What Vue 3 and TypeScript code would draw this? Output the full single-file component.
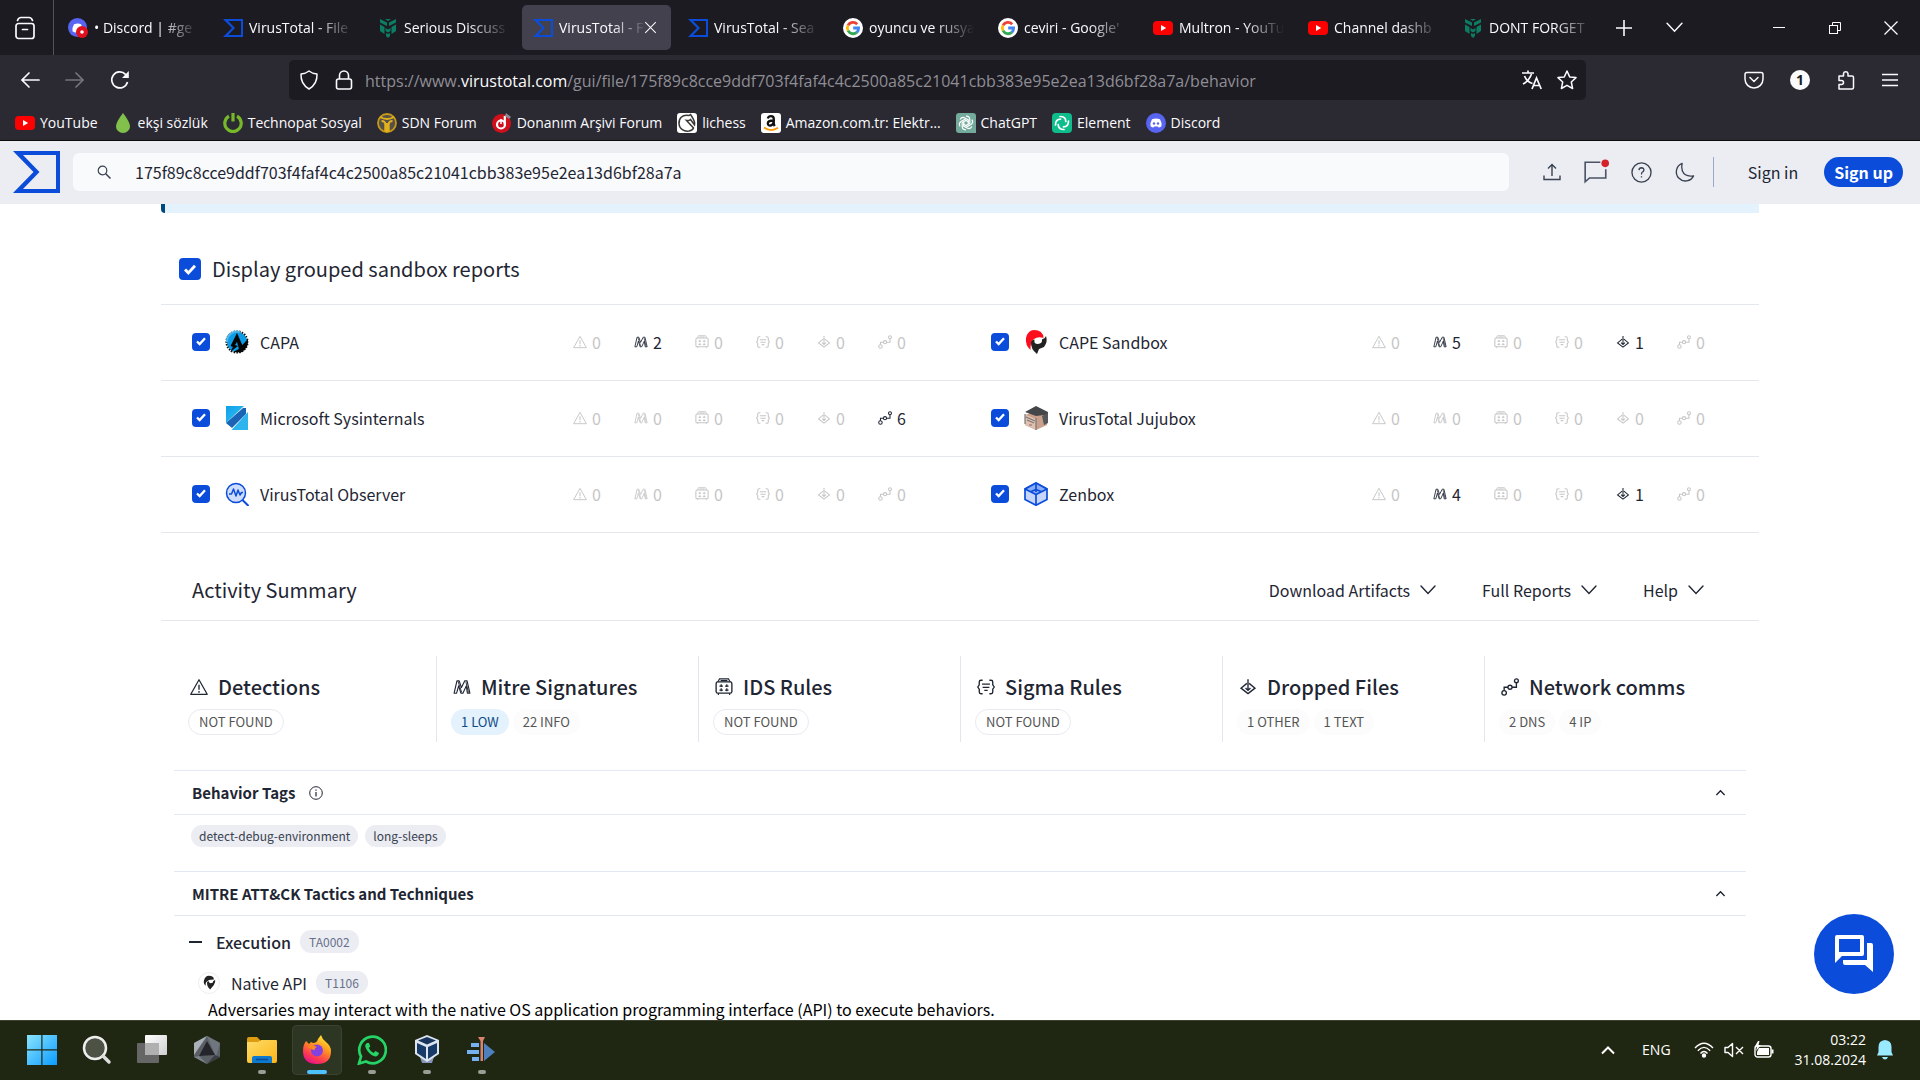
<script setup lang="ts">
import { ref } from 'vue'

interface Tab { icon: string; title: string; active?: boolean }
interface Bookmark { icon: string; label: string }
interface Sandbox { id: string; icon: string; name: string; counts: number[] }
interface Pill { text: string; kind: 'outline' | 'low' | 'plain' }
interface SummaryCard { icon: string; title: string; pills: Pill[] }
interface TaskItem { icon: string; label: string; state?: 'open' | 'active' }

const hash = '175f89c8cce9ddf703f4faf4c4c2500a85c21041cbb383e95e2ea13d6bf28a7a'
const query = ref(hash)
const grouped = ref(true)
const selected = ref(['capa', 'cape', 'sys', 'juju', 'obs', 'zen'])

const tabs: Tab[] = [
  { icon: 'discord-rec', title: '• Discord | #ge' },
  { icon: 'vt', title: 'VirusTotal - File' },
  { icon: 'wilders', title: 'Serious Discuss' },
  { icon: 'vt', title: 'VirusTotal - F', active: true },
  { icon: 'vt', title: 'VirusTotal - Sea' },
  { icon: 'google', title: 'oyuncu ve rusya' },
  { icon: 'google', title: "ceviri - Google'" },
  { icon: 'youtube', title: 'Multron - YouTu' },
  { icon: 'youtube', title: 'Channel dashb' },
  { icon: 'wilders', title: 'DONT FORGET' },
]

const bookmarks: Bookmark[] = [
  { icon: 'youtube', label: 'YouTube' },
  { icon: 'drop', label: 'ekşi sözlük' },
  { icon: 'power', label: 'Technopat Sosyal' },
  { icon: 'sdn', label: 'SDN Forum' },
  { icon: 'donanim', label: 'Donanım Arşivi Forum' },
  { icon: 'lichess', label: 'lichess' },
  { icon: 'amazon', label: 'Amazon.com.tr: Elektr…' },
  { icon: 'chatgpt', label: 'ChatGPT' },
  { icon: 'element', label: 'Element' },
  { icon: 'discord', label: 'Discord' },
]

const statIcons = ['warn', 'mitre', 'ids', 'sigma', 'dropped', 'net']

const sandboxes: Sandbox[] = [
  { id: 'capa', icon: 'capa', name: 'CAPA', counts: [0, 2, 0, 0, 0, 0] },
  { id: 'cape', icon: 'cape', name: 'CAPE Sandbox', counts: [0, 5, 0, 0, 1, 0] },
  { id: 'sys', icon: 'sysinternals', name: 'Microsoft Sysinternals', counts: [0, 0, 0, 0, 0, 6] },
  { id: 'juju', icon: 'jujubox', name: 'VirusTotal Jujubox', counts: [0, 0, 0, 0, 0, 0] },
  { id: 'obs', icon: 'observer', name: 'VirusTotal Observer', counts: [0, 0, 0, 0, 0, 0] },
  { id: 'zen', icon: 'zenbox', name: 'Zenbox', counts: [0, 4, 0, 0, 1, 0] },
]

const cards: SummaryCard[] = [
  { icon: 'warn', title: 'Detections', pills: [{ text: 'NOT FOUND', kind: 'outline' }] },
  { icon: 'mitre', title: 'Mitre Signatures', pills: [{ text: '1 LOW', kind: 'low' }, { text: '22 INFO', kind: 'plain' }] },
  { icon: 'ids', title: 'IDS Rules', pills: [{ text: 'NOT FOUND', kind: 'outline' }] },
  { icon: 'sigma', title: 'Sigma Rules', pills: [{ text: 'NOT FOUND', kind: 'outline' }] },
  { icon: 'dropped', title: 'Dropped Files', pills: [{ text: '1 OTHER', kind: 'plain' }, { text: '1 TEXT', kind: 'plain' }] },
  { icon: 'net', title: 'Network comms', pills: [{ text: '2 DNS', kind: 'plain' }, { text: '4 IP', kind: 'plain' }] },
]

const menus = ['Download Artifacts', 'Full Reports', 'Help']

const tasks: TaskItem[] = [
  { icon: 'win', label: 'Start' },
  { icon: 'tb-search', label: 'Search' },
  { icon: 'taskview', label: 'Task view' },
  { icon: 'gem', label: 'Cube app' },
  { icon: 'folder', label: 'File Explorer', state: 'open' },
  { icon: 'firefox', label: 'Firefox', state: 'active' },
  { icon: 'whatsapp', label: 'WhatsApp', state: 'open' },
  { icon: 'vbox', label: 'VirtualBox', state: 'open' },
  { icon: 'blocks', label: 'Startup tool', state: 'open' },
]
</script>

<template>
  <div class="screen">
    <svg class="sprite" aria-hidden="true">
      <defs>
        <linearGradient id="g-win" x1="0" y1="0" x2="1" y2="1"><stop offset="0" stop-color="#8be4ff" /><stop offset="1" stop-color="#0a9bff" /></linearGradient>
        <linearGradient id="g-fold" x1="0" y1="0" x2="1" y2="1"><stop offset="0" stop-color="#ffdc6a" /><stop offset="1" stop-color="#fbb616" /></linearGradient>
        <linearGradient id="g-ff" x1=".8" y1="0" x2=".3" y2="1"><stop offset="0" stop-color="#fff13a" /><stop offset=".4" stop-color="#ff9a1f" /><stop offset=".75" stop-color="#ff3d4f" /><stop offset="1" stop-color="#e6128b" /></linearGradient>
        <linearGradient id="g-tv" x1="0" y1="0" x2="1" y2="1"><stop offset="0" stop-color="#fff" /><stop offset="1" stop-color="#cfcfcf" /></linearGradient>
        <linearGradient id="g-sys" x1="0" y1="0" x2="1" y2="1"><stop offset="0" stop-color="#0f9fe8" /><stop offset="1" stop-color="#36c3f5" /></linearGradient>
      </defs>

      <symbol id="archive" viewBox="0 0 20 24" fill="none" stroke="#fbfbfe" stroke-width="1.7" stroke-linecap="round"><rect x="1" y="7.5" width="18" height="15" rx="2.5" /><path d="M2.5 4.5Q3.5 1.5 6 1.5H14Q16.5 1.5 17.5 4.5M7.5 13.5H12.5" /></symbol>
      <symbol id="vt" viewBox="0 0 20 20"><path d="M0 1H20V19H0L9 10ZM5.2 3L12 10L5.2 17H18V3Z" fill="#0b4dda" fill-rule="evenodd" /></symbol>
      <symbol id="vt-logo" viewBox="0 0 47 42"><path d="M0 0H47V42H0L20.500 21ZM10 4L26.500 21L10 38H43V4Z" fill="#0b4dda" fill-rule="evenodd" /></symbol>
      <symbol id="discord" viewBox="0 0 20 20"><circle cx="10" cy="10" r="10" fill="#5865f2" /><path d="M6 6.200Q10 5 14 6.200Q16 9.500 15.500 13.200Q14 14.500 12.500 14.500L12 13.500H8L7.500 14.500Q6 14.500 4.500 13.200Q4 9.500 6 6.200Z" fill="#fff" /><circle cx="8" cy="10.500" r="1.200" fill="#5865f2" /><circle cx="12" cy="10.500" r="1.200" fill="#5865f2" /></symbol>
      <symbol id="discord-rec" viewBox="0 0 20 20"><circle cx="9.500" cy="9.500" r="9.500" fill="#5865f2" /><path d="M6 6.200Q10 5 13 6.200Q15 9.500 14.500 13.200L12 14.500H8Q6 14.500 4.500 13.200Q4 9.500 6 6.200Z" fill="#fff" /><circle cx="14" cy="14" r="6" fill="#e0101c" /><circle cx="14" cy="14" r="1.800" fill="#fff" /></symbol>
      <symbol id="wilders" viewBox="0 0 20 20" fill="#0c7d62"><path d="M2 1L9 4.500V8L2 4.500ZM18 1L11 4.500V8L18 4.500ZM7 1H13L10 3ZM2 6.500L6.500 9V16L2 13ZM18 6.500L13.500 9V16L18 13ZM7.500 10L10 11.500L12.500 10V13L10 14.500L7.500 13ZM8 15L10 16L12 15V18L10 20L8 18Z" /></symbol>
      <symbol id="google" viewBox="0 0 20 20"><circle cx="10" cy="10" r="10" fill="#fff" /><g fill="none" stroke-width="2.800"><path d="M14.200 6.200A5.800 5.800 0 0 0 5 7.300" stroke="#ea4335" /><path d="M5 7.300A5.800 5.800 0 0 0 5 12.700" stroke="#fbbc05" /><path d="M5 12.700A5.800 5.800 0 0 0 13.800 14.400" stroke="#34a853" /><path d="M13.800 14.400A5.800 5.800 0 0 0 15.600 10H10.200" stroke="#4285f4" /></g></symbol>
      <symbol id="youtube" viewBox="0 0 20 20"><rect y="3" width="20" height="14" rx="4" fill="#f00" /><path d="M8 7V13L13.200 10Z" fill="#fff" /></symbol>
      <symbol id="drop" viewBox="0 0 20 20"><path d="M10 0Q17 9 17 13.500A7 6.500 0 0 1 3 13.500Q3 9 10 0Z" fill="#81c14b" /></symbol>
      <symbol id="power" viewBox="0 0 20 20" fill="none" stroke="#77b82a" stroke-width="3.200"><path d="M6 3.200A8.200 8.200 0 1 0 14 3.200M10 0V8.500" /></symbol>
      <symbol id="sdn" viewBox="0 0 20 20"><circle cx="10" cy="10" r="9" fill="#55504a" stroke="#c79a16" stroke-width="1.800" /><path d="M3 4Q10 8 17 4M4.500 8Q8 8 8.300 11V18.500M15.500 8Q12 8 11.700 11V18.500M10 10V19" fill="none" stroke="#e3b21b" stroke-width="2" /></symbol>
      <symbol id="donanim" viewBox="0 0 20 20"><circle cx="9.500" cy="10.500" r="9.500" fill="#d0101a" /><circle cx="9" cy="11.500" r="4" fill="none" stroke="#fff" stroke-width="2.200" /><path d="M12.800 3V12" stroke="#fff" stroke-width="2.200" /><path d="M14 0L19 4L17 6L13 3Z" fill="#8c8c90" /><path d="M9 6V11" stroke="#fff" stroke-width="1.500" /></symbol>
      <symbol id="lichess" viewBox="0 0 20 20"><rect width="20" height="20" rx="3" fill="#fff" /><path d="M12 2.500C5 1 1.500 6 2 11C2.500 16 7 18.800 12 18C14.500 17.500 16 16.500 16.500 15L9.500 7.500Q12 8 13.500 6.500L17.500 12Q18.500 9 14.500 3L13.500 1.500Z" fill="#fff" stroke="#3b3936" stroke-width="1.500" /></symbol>
      <symbol id="amazon" viewBox="0 0 20 20"><rect width="20" height="20" rx="3" fill="#fff" /><path d="M6.800 5.500Q7.500 3.200 10 3.200Q12.800 3.200 12.800 6V11.500L13.800 13M12.500 7.500Q6.800 7.500 6.800 10.500Q7 12.800 9.500 12.500Q12 12 12.500 9.500" fill="none" stroke="#111" stroke-width="2.300" /><path d="M3 14.500Q10 19.500 17 14.800" fill="none" stroke="#f90" stroke-width="1.700" /></symbol>
      <symbol id="chatgpt" viewBox="0 0 20 20"><path d="M3 0H17Q20 0 20 3V20H3Q0 20 0 17V3Q0 0 3 0Z" fill="#74aa9c" /><g fill="none" stroke="#fff" stroke-width="1.200"><path id="petal" d="M10 3.200Q13.500 3 13.800 6.500V10.500L10 12.500" /><use href="#petal" transform="rotate(60 10 10)" /><use href="#petal" transform="rotate(120 10 10)" /><use href="#petal" transform="rotate(180 10 10)" /><use href="#petal" transform="rotate(240 10 10)" /><use href="#petal" transform="rotate(300 10 10)" /></g></symbol>
      <symbol id="element" viewBox="0 0 20 20"><rect width="20" height="20" rx="4" fill="#0dbd8b" /><g fill="none" stroke="#fff" stroke-width="1.700" stroke-linecap="round"><path id="arm" d="M8 3.500Q13.800 3.500 13.800 8.500" /><use href="#arm" transform="rotate(90 10 10)" /><use href="#arm" transform="rotate(180 10 10)" /><use href="#arm" transform="rotate(270 10 10)" /></g></symbol>

      <symbol id="plus" viewBox="0 0 16 16"><path d="M8 0V16M0 8H16" stroke="currentColor" stroke-width="1.600" /></symbol>
      <symbol id="chev" viewBox="0 0 16 16"><path d="M1 4L8 11.500L15 4" fill="none" stroke="currentColor" stroke-width="1.400" stroke-linecap="round" /></symbol>
      <symbol id="chev-up" viewBox="0 0 16 16"><path d="M2 11.500L8 5.500L14 11.500" fill="none" stroke="currentColor" stroke-width="2" /></symbol>
      <symbol id="min" viewBox="0 0 16 16"><path d="M2 7.500H14" stroke="currentColor" /></symbol>
      <symbol id="restore" viewBox="0 0 16 16" fill="none" stroke="currentColor"><rect x="2.500" y="5.500" width="8" height="8" /><path d="M5.500 5V2.500H13.500V10.500H11" /></symbol>
      <symbol id="close" viewBox="0 0 16 16"><path d="M1.500 1.500L14.500 14.500M14.500 1.500L1.500 14.500" stroke="currentColor" stroke-width="1.300" /></symbol>
      <symbol id="back" viewBox="0 0 20 20"><path d="M19 10H2M9 3L2 10L9 17" fill="none" stroke="currentColor" stroke-width="1.700" stroke-linecap="round" /></symbol>
      <symbol id="reload" viewBox="0 0 20 20"><path d="M17.500 12A8 8 0 1 1 15.500 4.300L18 6.500" fill="none" stroke="currentColor" stroke-width="1.700" /><path d="M18.800 1V8H12Z" fill="currentColor" /></symbol>
      <symbol id="shield" viewBox="0 0 20 20"><path d="M10 1Q13 3.500 18 4Q18.500 14 10 19Q1.500 14 2 4Q7 3.500 10 1Z" fill="none" stroke="currentColor" stroke-width="1.500" stroke-linejoin="round" /></symbol>
      <symbol id="lock" viewBox="0 0 20 20" fill="none" stroke="currentColor" stroke-width="1.600"><rect x="2.500" y="9" width="15" height="10" rx="2" /><path d="M5.500 9V5.500A4.500 4.500 0 0 1 14.500 5.500V9" /></symbol>
      <symbol id="translate" viewBox="0 0 20 20" fill="none" stroke="currentColor" stroke-width="1.700"><path d="M0 3H12M6 .500V3M2.500 6Q5 12 10.500 13.500M9.500 4Q7 11 1 14M10 19L14.500 8L19.200 19M11.500 15.500H17.500" /></symbol>
      <symbol id="star" viewBox="0 0 20 20"><path d="M10 1L12.700 6.900L19 7.600L14.300 12L15.600 18.500L10 15.300L4.400 18.500L5.700 12L1 7.600L7.300 6.900Z" fill="none" stroke="currentColor" stroke-width="1.500" stroke-linejoin="round" /></symbol>
      <symbol id="pocket" viewBox="0 0 20 20" fill="none" stroke="currentColor" stroke-width="1.500" stroke-linecap="round"><path d="M3 2.500H17Q19 2.500 19 4.500V9A9 9 0 0 1 1 9V4.500Q1 2.500 3 2.500Z" /><path d="M6 7.500L10 11.500L14 7.500" /></symbol>
      <symbol id="puzzle" viewBox="0 0 20 20"><path d="M3 19V14.500H5.500A2 2 0 0 0 5.500 10.500H3V6H7.500V3.500A2.300 2.300 0 0 1 12 3.500V6H16Q17.500 6 17.500 7.500V17.500Q17.500 19 16 19Z" fill="none" stroke="currentColor" stroke-width="1.500" stroke-linejoin="round" /></symbol>
      <symbol id="burger" viewBox="0 0 16 16"><path d="M0 2.500H16M0 8H16M0 13.500H16" stroke="currentColor" stroke-width="1.400" /></symbol>

      <symbol id="search" viewBox="0 0 14 14" fill="none" stroke="#39414f"><circle cx="5.500" cy="5.500" r="4.300" stroke-width="1.200" /><path d="M8.500 8.500L13.500 13.500" stroke-width="1.500" /></symbol>
      <symbol id="upload" viewBox="0 0 18 18" fill="none" stroke="currentColor" stroke-width="1.400"><path d="M9 13V2M5 5.500L9 1.500L13 5.500M1 12.500V16.500H17V12.500" /></symbol>
      <symbol id="comment" viewBox="0 0 24 24"><path d="M16 3H2V21L6 17.500H21V9.500" fill="none" stroke="#4a5263" stroke-width="1.500" /><circle cx="20.500" cy="4" r="3.500" fill="#d2222a" /></symbol>
      <symbol id="help" viewBox="0 0 22 22" fill="none" stroke="currentColor" stroke-width="1.400"><circle cx="11" cy="11" r="10" /><path d="M8.300 8.500Q8.500 6 11 6Q13.700 6.200 13.500 8.500Q13.300 9.800 12 10.500Q11 11 11 13M11 14.800V16.300" /></symbol>
      <symbol id="moon" viewBox="0 0 22 22"><path d="M8.500 1.500A9.500 9.500 0 1 0 20.500 14.500Q11.500 16 8.800 9.500Q7.500 5 8.500 1.500Z" fill="none" stroke="currentColor" stroke-width="1.400" stroke-linejoin="round" /></symbol>

      <symbol id="warn" viewBox="0 0 16 16" fill="none" stroke="currentColor"><path d="M8 1.500L15.300 14.500H.700Z" stroke-width="1.100" stroke-linejoin="round" /><path d="M8 6V10.500M8 11.500V13" stroke-width="1.200" /></symbol>
      <symbol id="mitre" viewBox="0 0 16 16" fill="none" stroke="currentColor" stroke-linejoin="round"><path d="M1 13.500L3.500 2.500H5.500L7.500 8.500L10.500 2.500H12.500L15 13.500H12.800L11.800 7L8.800 13.500H7L5 7L3.200 13.500Z" stroke-width="1" /><path d="M4.500 3L7.800 13M11.500 3.500L13.800 13" stroke-width=".800" /></symbol>
      <symbol id="ids" viewBox="0 0 16 16" fill="none" stroke="currentColor"><rect x="1" y="3.500" width="14" height="10" rx="1.500" stroke-width="1.200" /><path d="M2.500 3.500L4 .800H12L13.500 3.500M5 2.300H11M3 13.500V15M13 13.500V15" stroke-width="1" /><path d="M5.500 5.500V8M10.500 5.500V8M5.500 9.200V11.700M10.500 9.200V11.700M4 7.200H7M9 7.200H12M4 10.800H7M9 10.800H12" stroke-width="1.100" /></symbol>
      <symbol id="sigma" viewBox="0 0 16 16" fill="none" stroke="currentColor" stroke-width="1.200"><path d="M5 2H3.500Q2 2 2 3.500V6L.700 8L2 10V12.500Q2 14 3.500 14H5M11 2H12.500Q14 2 14 3.500V6L15.300 8L14 10V12.500Q14 14 12.500 14H11M4.500 5.500H11.500M5 8.300H11M6.500 11H9.500" /></symbol>
      <symbol id="dropped" viewBox="0 0 16 16" fill="none" stroke="currentColor" stroke-width="1.200"><path d="M7 4.800L1.800 9L8 13.800L14.200 9L9 4.800M8 1V11M5.800 8.800L8 11L10.200 8.800" /></symbol>
      <symbol id="net" viewBox="0 0 16 16" fill="none" stroke="currentColor" stroke-width="1.200"><circle cx="2.800" cy="13.200" r="2" /><circle cx="8" cy="8.200" r="1.800" /><circle cx="13.700" cy="2.500" r="1.700" /><path d="M2.800 11V8.200H6.200M9.800 8.200H13.700V4.200" /></symbol>

      <symbol id="capa" viewBox="0 0 24 24"><circle cx="12" cy="12" r="10.200" fill="#0c9be6" /><circle cx="12" cy="12" r="10.700" fill="none" stroke="#111" stroke-width="1.800" stroke-dasharray="1.500 1.300" stroke-dashoffset="1" /><path d="M23 9Q24 18 16 22.500L8 22L13 19.500Z" fill="#050505" /><path d="M12 3L19 19H14L12 12L10 15L13 16L5 22L8 17L5.500 16Z" fill="#050505" /><path d="M2 12A10 10 0 0 1 15 2" fill="none" stroke="#4fb9ee" stroke-width="2" /></symbol>
      <symbol id="cape" viewBox="0 0 24 24"><path d="M10 0Q19 0 19.500 8Q14 6 10 9Q6 12 6.500 20Q1 15 2 8Q4 0 10 0Z" fill="#fb0d1c" /><path d="M22 6Q24 12 20 17L15 19L13 24Q6.500 19 7 12Q8 9.500 10.500 9.500Q9.500 14 14 14Q18.500 13.500 18 9.500Q21 9 22 6Z" fill="#222" /></symbol>
      <symbol id="cape-dark" viewBox="0 0 24 24"><path d="M11 1Q19 1 19 7L15 7.500Q10 7 9 10Q5 11 6 17Q2 14 3 9Q5 1 11 1Z" fill="#222" /><path d="M21 7Q22 12 19 16L13 23Q8 19 8 12Q9 10 11 10Q11 13 14 13Q18 13 18 9.500Q20 9 21 7Z" fill="#222" /></symbol>
      <symbol id="sysinternals" viewBox="0 0 24 24"><path d="M1 0H19L1 17Z" fill="url(#g-sys)" /><path d="M18 2H21V8L7 22L1 17Z" fill="#1b63b4" /><path d="M23 6V24H6.500Z" fill="#2db4ef" /></symbol>
      <symbol id="jujubox" viewBox="0 0 24 24"><path d="M12 5L23 9V19L12 24L1 19V9Z" fill="#c9a08c" /><path d="M1 8.500L12 13V24L1 19Z" fill="#e3c0ae" /><path d="M12 0L24 6V12L20 9L12 10L1 6Z" fill="#444649" /><path d="M18 10L24 7V17L20 19Z" fill="#55575a" /><path d="M2 11L11 15M3 14L10 17M5 19H8M1 8V18M12 12V24" stroke="#777" stroke-width="1.200" fill="none" /></symbol>
      <symbol id="observer" viewBox="0 0 24 24"><circle cx="11" cy="11" r="9.500" fill="#cfdcfb" stroke="#0b4dda" stroke-width="1.500" /><path d="M4 12H6.500L8.500 7L11 14L13 8L15 13L16.500 10.500H18" fill="none" stroke="#0b4dda" stroke-width="1.500" stroke-linejoin="round" /><path d="M17.500 18L23.500 24" stroke="#0b4dda" stroke-width="2" /></symbol>
      <symbol id="zenbox" viewBox="0 0 24 24" stroke="#0b4dda" stroke-width="1.700" stroke-linejoin="round"><path d="M12 1L23 7V17.500L12 23.200L1 17.500V7Z" fill="#c5d6fa" /><path d="M12 1L23 7L12 12.500L1 7Z" fill="#8aadf5" /><path d="M12 1V10M12 12.500V23M7 9.500L12 7.500L17 9.500" fill="none" /></symbol>
      <symbol id="info" viewBox="0 0 14 14" fill="none" stroke="currentColor"><circle cx="7" cy="7" r="6.300" /><path d="M7 6V10.500M7 3.500V4.800" stroke-width="1.200" /></symbol>
      <symbol id="forum" viewBox="0 0 38 38" fill="#fff"><path d="M2 0H27Q29 0 29 2V19Q29 21 27 21H7L0 28V2Q0 0 2 0ZM4 4V17H25V4Z" fill-rule="evenodd" /><path d="M32 8H36Q38 8 38 10V37L30 30H10Q8 30 8 28V25H32Z" /></symbol>

      <symbol id="win" viewBox="0 0 30 30"><path d="M0 0H14.300V14.300H0ZM15.500 0H30V14.300H15.500ZM0 15.500H14.300V30H0ZM15.500 15.500H30V30H15.500Z" fill="url(#g-win)" /></symbol>
      <symbol id="tb-search" viewBox="0 0 30 30"><circle cx="13" cy="13" r="11" fill="#4c5344" stroke="#eee" stroke-width="2.500" /><path d="M21 21L27 27" stroke="#ddd" stroke-width="3.500" stroke-linecap="round" /></symbol>
      <symbol id="taskview" viewBox="0 0 30 30"><rect y="8" width="22" height="20" rx="1" fill="#666" /><rect x="8" width="22" height="20" rx="1" fill="url(#g-tv)" /><path d="M8 8H22V20H8Z" fill="#b0b0b0" /></symbol>
      <symbol id="gem" viewBox="0 0 30 30"><path d="M15 1L28 8V22L15 29L2 22V8Z" fill="#5b6066" /><path d="M15 1L2 8V20Z" fill="#aab1b9" /><path d="M15 1L28 8L24 22Z" fill="#70767e" /><path d="M15 6L23 20L7 21Z" fill="#24262b" /><path d="M2 22L7 21L15 29Z" fill="#7b8189" /><path d="M15 29L23 20L28 22Z" fill="#3a3d42" /></symbol>
      <symbol id="folder" viewBox="0 0 30 30"><path d="M0 4Q0 2 2 2H10L13 5V10H0Z" fill="#dd9c10" /><path d="M0 7H11L14 5H29Q30 5 30 6V26Q30 28 28 28H2Q0 28 0 26Z" fill="url(#g-fold)" /><path d="M5 28V23Q5 21 7 21H23Q25 21 25 23V28Z" fill="#0d79cf" /><path d="M9 24.500H21" stroke="#0b4a8f" stroke-width="1.500" /></symbol>
      <symbol id="firefox" viewBox="0 0 30 30"><path d="M4 6L7 9L9 7L11 8Q15 8 16 4L19 0Q20 4 24 7Q29 11 29 16Q29 29 15 29Q1 29 1 16Q1 10 4 6Z" fill="url(#g-ff)" /><circle cx="15" cy="15.500" r="6" fill="#8342e0" /><path d="M6 12Q11 9 15 12Q12 13 13 15Q10 15 8 13Z" fill="#ff8a1d" /></symbol>
      <symbol id="whatsapp" viewBox="0 0 30 30"><path d="M2 28.500L4 21.500A13.300 13.300 0 1 1 9 26.500Z" fill="none" stroke="#25d366" stroke-width="2.700" /><path d="M10 8Q7 9.500 9 13.500Q12 19.500 17.500 21.300Q21 22 22 18L18.500 16L16.500 18Q13 16 11.800 13L13.300 11.500L12 8Z" fill="#25d366" /></symbol>
      <symbol id="vbox" viewBox="0 0 30 30"><path d="M8 22L22 22L20 28H10Z" fill="#8796b8" /><path d="M15 0L27 5V19L15 27L3 19V5Z" fill="#dce4f0" /><path d="M15 2L24 5.500L15 9.500L6 5.500Z" fill="#18345c" /><path d="M5 8L14 12V24L5 18ZM25 8L16 12V24L25 18Z" fill="#183a69" /></symbol>
      <symbol id="blocks" viewBox="0 0 30 30"><path d="M4 8H12V12H4ZM0 15H12V19H0ZM5 22H12V26H5Z" fill="#77b0ee" /><path d="M17 8L28 17L17 26Z" fill="#4d80bd" /><path d="M11 2H18L16 6V26H13.500V6Z" fill="#d98470" /></symbol>
      <symbol id="wifi" viewBox="0 0 20 16" fill="none" stroke="currentColor" stroke-width="1.400"><path d="M1 6Q10-3.500 19 6M3.800 8.800Q10 2 16.200 8.800M6.500 11.500Q10 7.500 13.500 11.500" /><circle cx="10" cy="13.500" r="1.500" fill="currentColor" /></symbol>
      <symbol id="mute" viewBox="0 0 20 16" fill="none" stroke="currentColor" stroke-width="1.400"><path d="M1 5.500H4L8.500 1.500V14.500L4 10.500H1ZM12 5L19 12M19 5L12 12" stroke-linejoin="round" /></symbol>
      <symbol id="battery" viewBox="0 0 20 18"><rect x="1" y="5" width="16" height="11" rx="2.500" fill="none" stroke="currentColor" stroke-width="1.400" /><path d="M5 7H15V14H3V11ZM17.500 8.500H19.500V12.500H17.500ZM4 0L.500 6H3L2 10L7 4H4.500L5.500 0Z" fill="currentColor" /></symbol>
      <symbol id="bell" viewBox="0 0 16 20"><path d="M8 0Q14.500 .500 14.500 7V12L16 15.500H0L1.500 12V7Q1.500 .500 8 0ZM5 17H11Q10 19.500 8 19.500Q6 19.500 5 17Z" fill="#9aeaff" /></symbol>
    </svg>

    <header class="chrome">
      <div class="tab-row">
        <button class="recent" aria-label="Recent browsing"><svg width="20" height="24"><use href="#archive" /></svg></button>
        <nav class="tabs" aria-label="Tabs">
          <div v-for="(t, i) in tabs" :key="i" class="tab" :class="{ active: t.active }">
            <svg class="fav"><use :href="'#' + t.icon" /></svg>
            <span class="tab-title">{{ t.title }}</span>
            <button v-if="t.active" class="tab-close" aria-label="Close tab"><svg width="13" height="13"><use href="#close" /></svg></button>
          </div>
        </nav>
        <div class="tab-actions">
          <button aria-label="New tab"><svg width="16" height="16"><use href="#plus" /></svg></button>
          <button aria-label="List all tabs"><svg width="17" height="17"><use href="#chev" /></svg></button>
        </div>
        <div class="win-actions">
          <button aria-label="Minimize"><svg width="16" height="16"><use href="#min" /></svg></button>
          <button aria-label="Restore"><svg width="16" height="16"><use href="#restore" /></svg></button>
          <button aria-label="Close window"><svg width="16" height="16"><use href="#close" /></svg></button>
        </div>
      </div>

      <div class="nav-row">
        <div class="nav-buttons">
          <button aria-label="Back"><svg width="20" height="20"><use href="#back" /></svg></button>
          <button class="dim flip" aria-label="Forward"><svg width="20" height="20"><use href="#back" /></svg></button>
          <button aria-label="Reload"><svg width="20" height="20"><use href="#reload" /></svg></button>
        </div>
        <div class="url-bar">
          <svg width="20" height="20"><use href="#shield" /></svg>
          <svg width="20" height="20"><use href="#lock" /></svg>
          <div class="url" role="textbox" aria-label="Address">https://www.<b>virustotal.com</b>/gui/file/{{ hash }}/behavior</div>
          <svg width="20" height="20"><use href="#translate" /></svg>
          <svg width="20" height="20"><use href="#star" /></svg>
        </div>
        <div class="ext-buttons">
          <button aria-label="Save to Pocket"><svg width="20" height="20"><use href="#pocket" /></svg></button>
          <button aria-label="Extension"><span class="one">1</span></button>
          <button aria-label="Extensions"><svg width="20" height="20"><use href="#puzzle" /></svg></button>
          <button aria-label="Menu"><svg width="16" height="16"><use href="#burger" /></svg></button>
        </div>
      </div>

      <nav class="bookmarks" aria-label="Bookmarks">
        <a v-for="b in bookmarks" :key="b.label" href="#"><svg class="fav"><use :href="'#' + b.icon" /></svg>{{ b.label }}</a>
      </nav>
    </header>

    <div class="vt">
      <header class="vt-head">
        <a href="#" class="logo" aria-label="VirusTotal"><svg width="47" height="42"><use href="#vt-logo" /></svg></a>
        <label class="search">
          <svg width="14" height="14"><use href="#search" /></svg>
          <input v-model="query" type="text" aria-label="Search" />
        </label>
        <div class="head-icons">
          <button aria-label="Upload"><svg width="18" height="18"><use href="#upload" /></svg></button>
          <button aria-label="Comments"><svg width="26" height="26"><use href="#comment" /></svg></button>
          <button aria-label="Help"><svg width="21" height="21"><use href="#help" /></svg></button>
          <button aria-label="Dark mode"><svg width="21" height="21"><use href="#moon" /></svg></button>
        </div>
        <a href="#" class="sign-in">Sign in</a>
        <a href="#" class="sign-up">Sign up</a>
      </header>

      <main class="page">
        <div class="notice"></div>
        <label class="group-toggle"><input v-model="grouped" type="checkbox" class="check big" />Display grouped sandbox reports</label>

        <div class="sandboxes">
          <div v-for="s in sandboxes" :key="s.id" class="sandbox">
            <label class="sandbox-name">
              <input v-model="selected" type="checkbox" class="check" :value="s.id" />
              <svg width="24" height="24"><use :href="'#' + s.icon" /></svg>{{ s.name }}
            </label>
            <ul class="stats">
              <li v-for="(c, i) in s.counts" :key="i" :class="{ on: c > 0 }">
                <svg width="14" height="14"><use :href="'#' + statIcons[i]" /></svg>{{ c }}
              </li>
            </ul>
          </div>
        </div>

        <div class="summary-head">
          <h2>Activity Summary</h2>
          <div class="menus">
            <button v-for="m in menus" :key="m">{{ m }}<svg width="16" height="16"><use href="#chev" /></svg></button>
          </div>
        </div>

        <div class="details">
          <div class="cards">
            <section v-for="c in cards" :key="c.title" class="card">
              <h3><svg width="18" height="18"><use :href="'#' + c.icon" /></svg>{{ c.title }}</h3>
              <div class="pills"><span v-for="p in c.pills" :key="p.text" class="pill" :class="p.kind">{{ p.text }}</span></div>
            </section>
          </div>

          <section>
            <button class="section-head">Behavior Tags<svg class="info" width="14" height="14"><use href="#info" /></svg><svg class="caret" width="11" height="11"><use href="#chev-up" /></svg></button>
            <div class="tags"><a href="#">detect-debug-environment</a><a href="#">long-sleeps</a></div>
          </section>

          <section>
            <button class="section-head">MITRE ATT&amp;CK Tactics and Techniques<svg class="caret" width="11" height="11"><use href="#chev-up" /></svg></button>
            <div class="tactic"><span class="minus"></span><strong>Execution</strong><a href="#" class="code">TA0002</a></div>
            <div class="technique"><span class="ring"><svg width="15" height="15"><use href="#cape-dark" /></svg></span>Native API<a href="#" class="code">T1106</a></div>
            <p class="desc">Adversaries may interact with the native OS application programming interface (API) to execute behaviors.</p>
          </section>
        </div>
      </main>
      <button class="fab" aria-label="Open chat"><svg width="38" height="38"><use href="#forum" /></svg></button>
    </div>

    <footer class="taskbar">
      <div class="tasks">
        <button v-for="t in tasks" :key="t.icon" class="task" :class="t.state" :aria-label="t.label"><svg width="30" height="30"><use :href="'#' + t.icon" /></svg></button>
      </div>
      <div class="tray">
        <button aria-label="Hidden icons"><svg width="16" height="16"><use href="#chev-up" /></svg></button>
        <span class="lang">ENG</span>
        <span class="status"><svg width="20" height="16"><use href="#wifi" /></svg><svg width="20" height="16"><use href="#mute" /></svg><svg width="20" height="18"><use href="#battery" /></svg></span>
        <time class="clock">03:22<br />31.08.2024</time>
        <svg width="16" height="20"><use href="#bell" /></svg>
      </div>
    </footer>
  </div>
</template>

<style>
body { margin: 0; background: #fff; }
</style>

<style scoped>
.screen, .screen * { box-sizing: border-box; }
.screen { display: flex; flex-direction: column; height: 100vh; overflow: hidden; }
.sprite { position: absolute; width: 0; height: 0; }
svg { flex: none; display: block; }
button { background: none; border: 0; padding: 0; margin: 0; font: inherit; color: inherit; display: flex; align-items: center; justify-content: center; }
a { color: inherit; text-decoration: none; }
ul { list-style: none; margin: 0; padding: 0; }
h2, h3, p { margin: 0; }
.fav { width: 20px; height: 20px; }

.chrome { flex: none; background: #2b2a33; color: #fbfbfe; font: 14px "Open Sans", sans-serif; border-bottom: 1px solid #0c0c0d; }
.tab-row { display: flex; height: 55px; background: #1c1b22; }
.recent { width: 54px; padding-right: 4px; border-right: 1px solid #52525e; }
.tabs { display: grid; grid-template-columns: repeat(10, minmax(0, 1fr)); flex: 0 1 1550px; min-width: 0; }
.tab { display: flex; align-items: center; gap: 6px; margin: 5px 3px; padding: 0 2px 0 11px; border-radius: 5px; position: relative; }
.tab.active { background: #42414d; padding-right: 24px; }
.tab-title { flex: 1; min-width: 0; overflow: hidden; white-space: nowrap; mask-image: linear-gradient(to left, transparent 5px, #000 45px); }
.tab.active .tab-title { mask-image: linear-gradient(to left, transparent 0, #000 35px); }
.tab-close { position: absolute; right: 14px; top: 16px; }
.tab-actions { display: flex; gap: 34px; margin-left: 12px; }
.win-actions { display: flex; gap: 40px; margin-left: auto; padding-right: 21px; }
.nav-row { display: flex; align-items: center; height: 50px; }
.nav-buttons { display: flex; gap: 25px; width: 289px; padding-left: 20px; }
.flip { transform: scaleX(-1); }
.dim { color: #75747c; }
.url-bar { flex: 1; min-width: 0; display: flex; align-items: center; gap: 15px; height: 40px; padding: 0 9px 0 10px; background: #1c1b22; border-radius: 5px; }
.url { flex: 1; min-width: 0; overflow: hidden; white-space: nowrap; font-size: 16px; color: #8f8e95; margin-left: -4px; padding-top: 2px; }
.url b { font-weight: 400; color: #fbfbfe; }
.ext-buttons { display: flex; justify-content: flex-end; gap: 26px; width: 334px; padding-right: 22px; }
.one { width: 20px; height: 20px; border-radius: 50%; background: #fbfbfe; color: #1c1b22; font-size: 14px; line-height: 20px; font-weight: 700; }
.bookmarks { display: flex; align-items: center; height: 35px; gap: 15px; padding-left: 15px; white-space: nowrap; }
.bookmarks a { display: flex; align-items: center; gap: 5px; }

.vt { flex: 1; min-height: 0; overflow: hidden; position: relative; color: #1f2633; background: #fff; font: 16px/22px "Noto Sans CJK SC", sans-serif; }
.vt-head { display: flex; align-items: center; height: 63px; padding: 0 17px 1px 13px; background: #ebedf3; }
.search { flex: 1; display: flex; align-items: center; height: 38px; margin-left: 13px; padding-left: 24px; background: #f9fafc; border-radius: 6px; }
.search input { flex: 1; margin-left: 24px; padding: 0; border: 0; outline: 0; background: none; font: inherit; color: inherit; }
.head-icons { display: flex; align-items: center; gap: 22px; height: 30px; margin-left: 34px; padding-right: 18px; border-right: 1px solid #9aa9c6; color: #39414f; }
.sign-in { margin-left: 34px; }
.sign-up { margin-left: 26px; padding: 4px 10px; border-radius: 15px; background: #0b4dda; color: #fff; font-weight: 700; }

.page { margin: 0 161px; }
.notice { height: 9px; background: #e3f2fd; border-left: 4px solid #01487e; border-bottom-left-radius: 4px; }
.check { appearance: none; flex: none; width: 18px; height: 18px; margin: 0; border-radius: 4px; background: #0b4dda url("data:image/svg+xml,%3Csvg xmlns='http://www.w3.org/2000/svg' viewBox='0 0 18 18'%3E%3Cpath d='M4.500 9.500L7.500 12.500L13.500 6' fill='none' stroke='white' stroke-width='2.600'/%3E%3C/svg%3E") center / 90% no-repeat; }
.check.big { width: 22px; height: 22px; }
.group-toggle { display: flex; align-items: center; gap: 11px; height: 92px; padding: 20px 18px 0; border-bottom: 1px solid #e3e6ee; font-size: 20px; }
.sandboxes { display: grid; grid-template-columns: 1fr 1fr; }
.sandbox { display: flex; align-items: center; height: 76px; padding: 0 21px 2px 31px; border-bottom: 1px solid #e3e6ee; }
.sandbox-name { flex: 1; display: flex; align-items: center; }
.sandbox-name svg { margin: 0 11px 0 15px; }
.stats { display: grid; grid-template-columns: repeat(6, 61px); color: #c6c6c6; }
.stats li { display: flex; align-items: center; gap: 5px; }
.stats .on { color: #1f2633; }
.summary-head { display: flex; align-items: center; height: 88px; padding: 27px 55px 0 31px; border-bottom: 1px solid #e3e6ee; }
h2 { font-size: 20px; font-weight: 400; }
.menus { display: flex; gap: 46px; margin-left: auto; }
.menus button { gap: 10px; }
.details { margin: 0 13px; }
.cards { display: grid; grid-template-columns: repeat(6, 1fr); padding: 35px 0 28px; }
.card { height: 86px; padding: 18px 0 0 14px; }
.card + .card { border-left: 1px solid #e3e6ee; }
h3 { display: flex; align-items: center; gap: 10px; font-size: 20px; line-height: 26px; font-weight: 500; padding-left: 2px; white-space: nowrap; }
.pills { display: flex; gap: 4px; margin-top: 9px; }
.pill { height: 26px; padding: 0 9px; border: 1px solid transparent; border-radius: 13px; font-size: 13px; line-height: 24px; color: #555; background: #fcfcfc; }
.outline { padding: 0 10px; border-color: #e8eaf1; background: #fff; }
.low { background: #e3f2fd; color: #0f4a86; }
.section-head { width: 100%; height: 45px; justify-content: flex-start; padding: 0 20px 0 18px; border: solid #e3e9f2; border-width: 1px 0; font-size: 15px; font-weight: 700; }
.info { margin-left: 14px; }
.caret { margin-left: auto; }
.tags { display: flex; gap: 7px; height: 56px; padding: 10px 0 0 17px; }
.tags a { height: 22px; padding: 0 8px; border-radius: 11px; background: #ebedf3; font-size: 12px; line-height: 22px; color: #39414f; }
.tactic { display: flex; align-items: center; height: 51px; padding-left: 15px; }
.minus { width: 13px; height: 2px; margin-right: 14px; background: #1f2633; }
.tactic strong { font-weight: 500; }
.code { height: 23px; margin-left: 9px; padding: 0 9px; border-radius: 11px; background: #ebedf3; color: #66708a; font-size: 12px; line-height: 23px; }
.technique { display: flex; align-items: center; height: 31px; padding-left: 24px; }
.ring { display: grid; place-items: center; width: 22px; height: 22px; margin-right: 11px; border: 1px solid #eceef3; border-radius: 50%; }
.desc { padding-left: 34px; color: #000; white-space: nowrap; }
.fab { position: absolute; right: 26px; bottom: 26px; width: 80px; height: 80px; border-radius: 50%; background: #0b4dda; }

.taskbar { flex: none; display: flex; align-items: center; height: 60px; padding: 0 27px 2px 17px; background: #1f2713; border-top: 1px solid #3b4231; color: #fff; font: 14px/20px "Open Sans", sans-serif; }
.tasks { display: flex; gap: 5px; }
.task { position: relative; width: 50px; height: 50px; border-radius: 5px; }
.task.active { background: #2d3523; box-shadow: inset 0 0 0 1px #3b4232; }
.task.open::after, .task.active::after { content: ""; position: absolute; bottom: 1px; width: 8px; height: 4px; border-radius: 2px; background: #9a9d95; }
.task.active::after { width: 20px; background: #4cc2ff; }
.tray { display: flex; align-items: center; margin-left: auto; }
.lang { margin: 0 23px 0 26px; }
.status { display: flex; align-items: center; gap: 10px; }
.clock { margin: 0 11px 0 21px; text-align: right; }
</style>
